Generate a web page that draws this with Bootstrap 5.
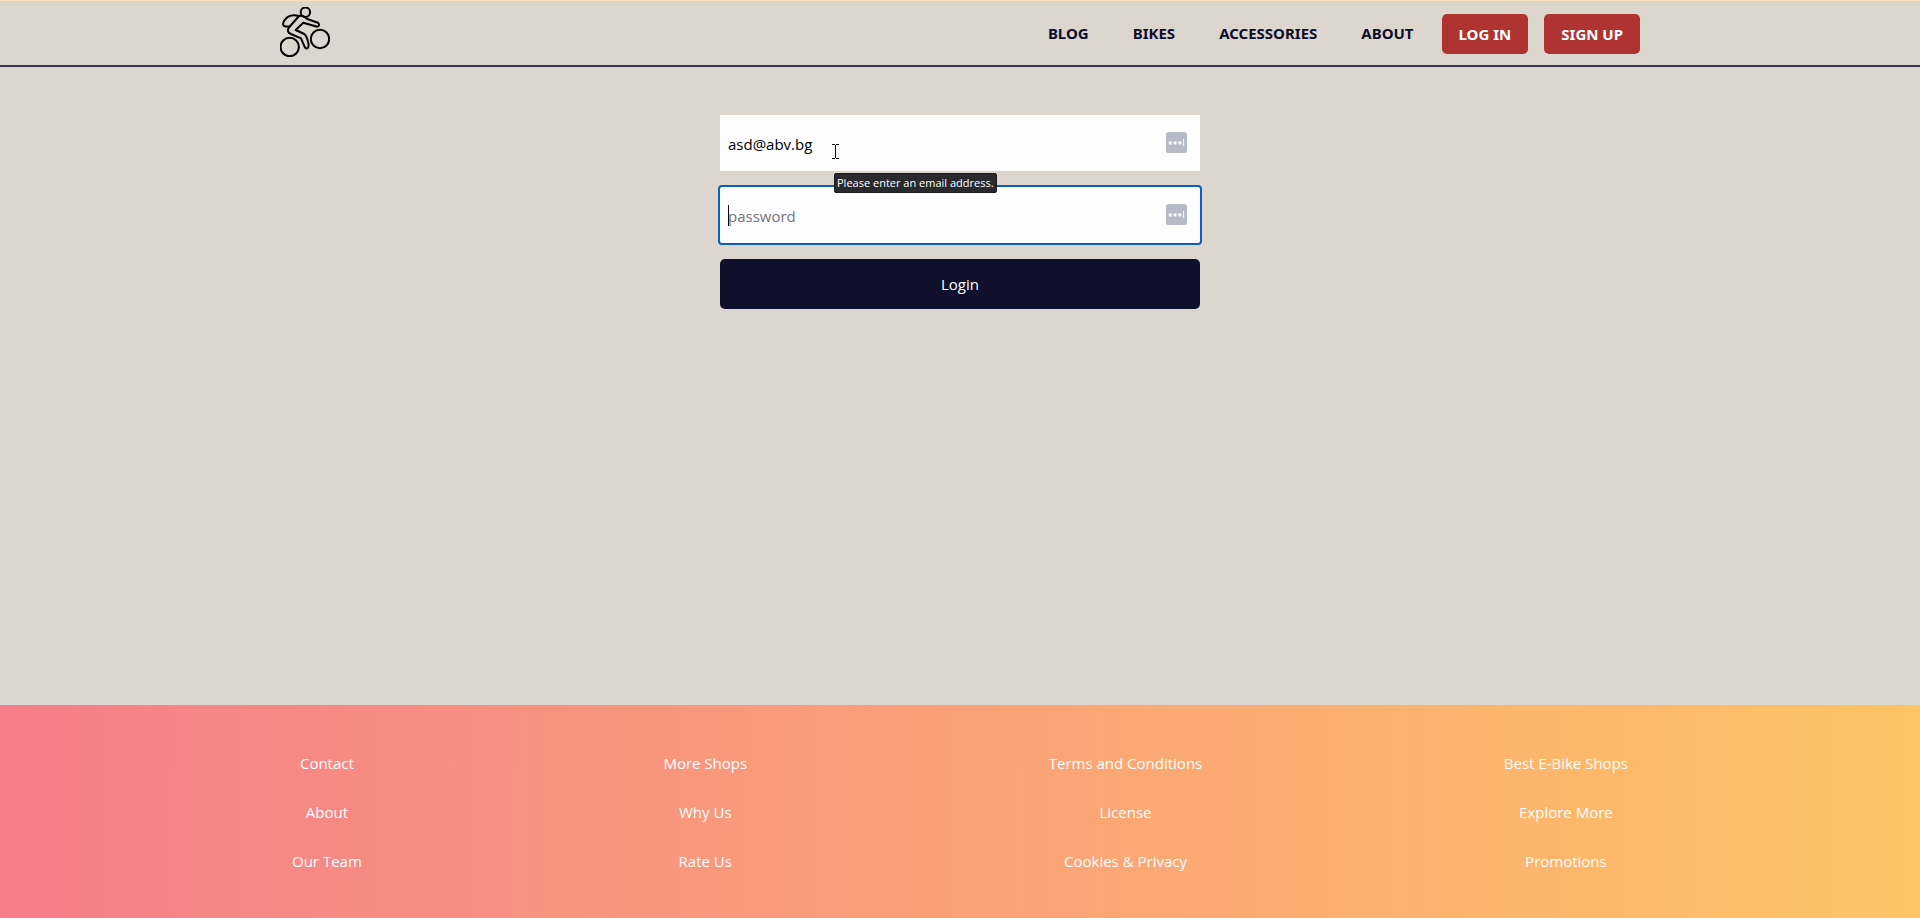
<!DOCTYPE html>
<html lang="en">
<head>
<meta charset="utf-8">
<meta name="viewport" content="width=device-width, initial-scale=1">
<title>Bikes – Log in</title>
<link href="https://cdn.jsdelivr.net/npm/bootstrap@5.3.0/dist/css/bootstrap.min.css" rel="stylesheet">
<style>
  :root { --navy: #0c0d2b; --sand: #dcd6cf; --brick: #af3431; }
  body { font-family: "Open Sans", "Noto Sans", sans-serif; font-size: 15px; line-height: 24px; color: #000; background: var(--sand); }
  .site-width { width: 100%; max-width: 1360px; }
  .site-header { border-top: 1px solid #f6e3bd; border-bottom: 2px solid #3f3550; font-family: "Noto Sans", "Open Sans", sans-serif; }
  .site-header .navbar-brand { padding: 6px 0 8px; }
  .site-header .navbar-brand svg { width: 50px; height: 50px; display: block; }
  .menu-link { color: var(--navy); font-weight: 700; padding: 8px 22px; text-transform: uppercase; text-decoration: none; }
  .account-actions { margin-left: 6px; padding-top: 2px; }
  .btn-brick { --bs-btn-color: #fff; --bs-btn-bg: var(--brick); --bs-btn-hover-color: #fff; --bs-btn-hover-bg: #932a28; --bs-btn-font-family: inherit; --bs-btn-border-width: 0; --bs-btn-padding-x: 17px; --bs-btn-padding-y: 8px; --bs-btn-font-size: 15px; --bs-btn-line-height: 24px; --bs-btn-border-radius: 5px; font-weight: 700; text-transform: uppercase; }
  .login-form { width: 100%; max-width: 480px; }
  .login-form .form-control { height: 56px; padding: 2px 48px 0 8px; border: 0; border-radius: 0; background: #fdfdfd; color: #000; font-size: 15px; box-shadow: none; }
  .login-form .form-control::placeholder { color: #757575; }
  .login-form .is-active { outline: 2px solid #0a5fc0; outline-offset: 0; border-radius: 2px; }
  .filler { right: 13px; top: 17px; width: 21px; height: 21px; }
  .caret { left: 8px; top: 18px; width: 1px; height: 21px; background: #000; }
  .pointer { left: 111px; top: 28px; width: 9px; height: 18px; }
  .hint { left: 114px; top: 58px; padding: 0 2px; font-size: 11px; line-height: 18px; color: #fff; background: #29292e; border: 1px solid #1c1c20; border-radius: 2px; z-index: 3; }
  .btn-navy { --bs-btn-color: #fff; --bs-btn-bg: #0f102c; --bs-btn-hover-color: #fff; --bs-btn-hover-bg: #20224c; --bs-btn-border-width: 0; --bs-btn-font-size: 15px; --bs-btn-border-radius: 5px; height: 50px; }
  .site-footer { background: linear-gradient(to right, #f57e8a, #fec465); padding: 34px 0 32px; }
  .site-footer a { color: #fff; text-decoration: none; padding: 12px; line-height: 25px; }
</style>
</head>
<body class="d-flex flex-column min-vh-100">
<header class="site-header">
  <nav class="site-width mx-auto d-flex align-items-center justify-content-between">
    <a class="navbar-brand m-0" href="#" aria-label="Home">
      <svg viewBox="0 0 50 50" fill="none" stroke="#000" stroke-width="2" stroke-linejoin="round" stroke-linecap="round">
        <circle cx="9.700" cy="40" r="9.2"/><circle cx="40" cy="32" r="9.2"/><circle cx="25.400" cy="5.200" r="4.700"/>
        <path d="M19 9Q23 8 27.300 12L38 15.700Q40.500 18.500 37.300 19.700L23.300 15.700L15.700 23L24.300 27Q27 29 28.700 37.500Q28.500 43 25 40.700L21 31.300L11 27Q6.500 25 8.500 21Z"/>
        <path d="M19 9Q9 6 4 14Q1.500 19 5.500 19.500H10"/>
      </svg>
    </a>
    <div class="d-flex align-items-center">
      <a class="menu-link" href="#">Blog</a>
      <a class="menu-link" href="#">Bikes</a>
      <a class="menu-link" href="#">Accessories</a>
      <a class="menu-link" href="#">About</a>
      <div class="account-actions d-flex gap-3">
        <button class="btn btn-brick" type="button">Log in</button>
        <button class="btn btn-brick" type="button">Sign up</button>
      </div>
    </div>
  </nav>
</header>
<main class="flex-grow-1 pt-5">
  <form class="login-form mx-auto d-flex flex-column gap-3">
    <div class="position-relative">
      <input class="form-control" type="email" value="asd@abv.bg" placeholder="email" aria-label="Email">
      <svg class="filler position-absolute" viewBox="0 0 22 22"><rect width="22" height="22" rx="3" fill="#b6bac6"/><path d="M3 10h3v3H3zM8 10h3v3H8zM13 10h3v3h-3zM18 7h1v8h-1z" fill="#fff"/></svg>
      <svg class="pointer position-absolute" viewBox="0 0 9 18" fill="none" stroke="#000"><path d="M1 1.500H4M5 1.500H8M4.500 2V15M1 15.500H4M5 15.500H8"/></svg>
      <div class="hint position-absolute text-nowrap" role="tooltip">Please enter an email address.</div>
    </div>
    <div class="position-relative">
      <input class="form-control is-active" type="password" placeholder="password" aria-label="Password">
      <span class="caret position-absolute"></span>
      <svg class="filler position-absolute" viewBox="0 0 22 22"><rect width="22" height="22" rx="3" fill="#b6bac6"/><path d="M3 10h3v3H3zM8 10h3v3H8zM13 10h3v3h-3zM18 7h1v8h-1z" fill="#fff"/></svg>
    </div>
    <button class="btn btn-navy w-100" type="submit">Login</button>
  </form>
</main>
<footer class="site-footer">
  <div class="site-width mx-auto d-flex justify-content-between text-center">
    <div class="d-flex flex-column"><a href="#">Contact</a><a href="#">About</a><a href="#">Our Team</a></div>
    <div class="d-flex flex-column"><a href="#">More Shops</a><a href="#">Why Us</a><a href="#">Rate Us</a></div>
    <div class="d-flex flex-column"><a href="#">Terms and Conditions</a><a href="#">License</a><a href="#">Cookies &amp; Privacy</a></div>
    <div class="d-flex flex-column"><a href="#">Best E-Bike Shops</a><a href="#">Explore More</a><a href="#">Promotions</a></div>
  </div>
</footer>
<script src="https://cdn.jsdelivr.net/npm/bootstrap@5.3.0/dist/js/bootstrap.bundle.min.js"></script>
</body>
</html>
